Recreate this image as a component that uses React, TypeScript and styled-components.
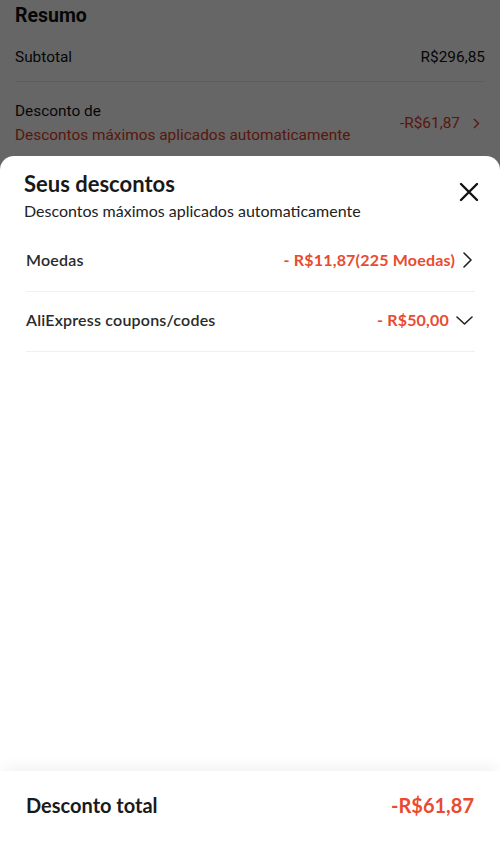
import styled, { createGlobalStyle } from "styled-components";

const GlobalStyle = createGlobalStyle`
  html, body {
    margin: 0;
    padding: 0;
    background: #ffffff;
  }
  * {
    box-sizing: border-box;
  }
`;

const red = "#ea4a2f";

const Screen = styled.div`
  position: relative;
  width: 500px;
  height: 845px;
  overflow: hidden;
  background: #ffffff;
  font-family: Roboto, "Liberation Sans", sans-serif;
`;

const Summary = styled.section`
  padding: 4px 15px 0 15px;
  color: #111111;
`;

const SummaryTitle = styled.h2`
  margin: 0;
  font-size: 19.5px;
  line-height: 24px;
  font-weight: 700;
`;

const SummaryRow = styled.div<{ $divider?: boolean }>`
  display: flex;
  justify-content: space-between;
  align-items: center;
  height: ${(p) => (p.$divider ? "54px" : "auto")};
  padding: ${(p) => (p.$divider ? "4px 0 0" : "17px 0")};
  border-bottom: ${(p) => (p.$divider ? "1px solid #e6e6e6" : "none")};
  font-size: 15.4px;
  line-height: 24px;
`;

const SummaryLabel = styled.div`
  display: flex;
  flex-direction: column;
`;

const SummaryHint = styled.span`
  color: #dc3d23;
`;

const SummaryDiscount = styled.span`
  display: flex;
  align-items: center;
  gap: 13px;
  padding-right: 5px;
  color: #dc3d23;
`;

const Overlay = styled.div`
  position: absolute;
  inset: 0;
  background: rgba(0, 0, 0, 0.6);
`;

const Sheet = styled.div`
  position: absolute;
  top: 156px;
  left: 0;
  right: 0;
  bottom: 0;
  display: flex;
  flex-direction: column;
  background: #ffffff;
  border-radius: 14px 14px 0 0;
  font-family: Lato, "Open Sans", sans-serif;
`;

const SheetHeader = styled.header`
  position: relative;
  padding: 14px 24px 0 24px;
`;

const SheetTitle = styled.h1`
  margin: 0;
  font-size: 22px;
  line-height: 28px;
  font-weight: 700;
  color: #191919;
`;

const SheetSubtitle = styled.p`
  margin: 2px 0 0;
  font-size: 16px;
  line-height: 22px;
  color: #222222;
`;

const CloseButton = styled.button`
  position: absolute;
  top: 24px;
  right: 19px;
  width: 24px;
  height: 24px;
  padding: 0;
  border: none;
  background: none;
  display: flex;
  align-items: center;
  justify-content: center;
`;

const List = styled.ul`
  list-style: none;
  margin: 10px 0 0;
  padding: 0 25px 0 26px;
`;

const Row = styled.li`
  display: flex;
  align-items: center;
  justify-content: space-between;
  height: 60px;
  padding-bottom: 4px;
  border-bottom: 1px solid #f0f0f0;
  font-size: 16px;
`;

const RowLabel = styled.span`
  font-weight: 600;
  color: #2a2a2a;
  letter-spacing: 0.2px;
`;

const RowValue = styled.span`
  display: flex;
  align-items: center;
  gap: 7px;
  padding-right: 2px;
  color: ${red};
  font-weight: 700;
  letter-spacing: 0.2px;
`;

const Footer = styled.footer`
  margin-top: auto;
  display: flex;
  justify-content: space-between;
  align-items: center;
  height: 74px;
  padding: 0 26px 6px 26px;
  background: #ffffff;
  box-shadow: 0 -8px 14px -4px rgba(0, 0, 0, 0.06);
`;

const FooterLabel = styled.span`
  font-size: 20px;
  font-weight: 700;
  color: #1a1a1a;
`;

const FooterValue = styled.span`
  font-size: 20px;
  font-weight: 700;
  color: ${red};
`;

const ChevronRight = () => (
  <svg width="11" height="16" viewBox="0 0 11 16" fill="none">
    <polyline
      points="2,1 9,8 2,15"
      stroke="#222"
      strokeWidth="1.6"
      strokeLinecap="round"
      strokeLinejoin="round"
    />
  </svg>
);

const ChevronDown = () => (
  <svg width="17" height="12" viewBox="0 0 17 12" fill="none">
    <polyline
      points="1,3 8.5,10 16,3"
      stroke="#222"
      strokeWidth="1.6"
      strokeLinecap="round"
      strokeLinejoin="round"
    />
  </svg>
);

const SmallChevron = () => (
  <svg width="7" height="11" viewBox="0 0 7 11" fill="none">
    <polyline points="1,1 5.5,5.5 1,10" stroke="#dc3d23" strokeWidth="1.4" />
  </svg>
);

const CloseIcon = () => (
  <svg width="20" height="20" viewBox="0 0 20 20" fill="none">
    <path
      d="M2 2 L18 18 M18 2 L2 18"
      stroke="#111"
      strokeWidth="2.4"
      strokeLinecap="round"
    />
  </svg>
);

const App = () => {
  return (
    <Screen>
      <GlobalStyle />
      <Summary>
        <SummaryTitle>Resumo</SummaryTitle>
        <SummaryRow $divider>
          <span>Subtotal</span>
          <span>R$296,85</span>
        </SummaryRow>
        <SummaryRow>
          <SummaryLabel>
            <span>Desconto de</span>
            <SummaryHint>Descontos máximos aplicados automaticamente</SummaryHint>
          </SummaryLabel>
          <SummaryDiscount>
            -R$61,87
            <SmallChevron />
          </SummaryDiscount>
        </SummaryRow>
      </Summary>

      <Overlay />

      <Sheet>
        <SheetHeader>
          <SheetTitle>Seus descontos</SheetTitle>
          <SheetSubtitle>Descontos máximos aplicados automaticamente</SheetSubtitle>
          <CloseButton aria-label="Fechar">
            <CloseIcon />
          </CloseButton>
        </SheetHeader>

        <List>
          <Row>
            <RowLabel>Moedas</RowLabel>
            <RowValue>
              - R$11,87(225 Moedas)
              <ChevronRight />
            </RowValue>
          </Row>
          <Row>
            <RowLabel>AliExpress coupons/codes</RowLabel>
            <RowValue>
              - R$50,00
              <ChevronDown />
            </RowValue>
          </Row>
        </List>

        <Footer>
          <FooterLabel>Desconto total</FooterLabel>
          <FooterValue>-R$61,87</FooterValue>
        </Footer>
      </Sheet>
    </Screen>
  );
};

export default App;
